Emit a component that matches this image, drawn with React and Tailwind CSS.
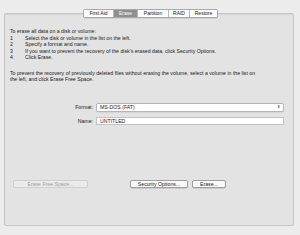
import React from 'react';

const tabs = ['First Aid', 'Erase', 'Partition', 'RAID', 'Restore'];

const steps = [
  'Select the disk or volume in the list on the left.',
  'Specify a format and name.',
  "If you want to prevent the recovery of the disk's erased data, click Security Options.",
  'Click Erase.',
];

export default function App() {
  return (
    <div className="w-[300px] h-[235px] bg-[#ececec] pt-[9px] overflow-hidden" style={{ fontFamily: '"Liberation Sans", Arial, sans-serif' }}>
      {/* tab bar */}
      <div className="relative z-10 flex justify-center pl-[1px] h-[9px]">
        <div className="flex h-[9px] border border-[#a9a9a9] rounded-[2px] bg-white shadow-[0_0.5px_0.5px_rgba(0,0,0,0.15)] overflow-hidden">
          {tabs.map((t, i) => (
            <div
              key={t}
              className={
                'flex items-center justify-center text-[5px] leading-none ' +
                (i > 0 ? 'border-l border-[#b9b9b9] ' : '') +
                (t === 'Erase' ? 'bg-[#8f8f8f] text-white' : 'bg-[#fbfbfb] text-[#222]')
              }
              style={{ width: [29, 24, 31, 21, 28][i] }}
            >
              {t}
            </div>
          ))}
        </div>
      </div>

      {/* panel */}
      <div className="ml-[4px] w-[290px] h-[213px] -mt-[5px] bg-[#e3e3e3] border border-[#c6c6c6] rounded-[2px] shadow-[inset_0_1px_1px_rgba(0,0,0,0.06)] pt-[14px] px-[5px] text-[5.2px] leading-[6.5px] text-[#1a1a1a]">
        <div>To erase all data on a disk or volume:</div>
        {steps.map((s, i) => (
          <div key={i} className="flex">
            <span className="w-[15px] shrink-0">{i + 1}</span>
            <span>{s}</span>
          </div>
        ))}

        <div className="mt-[9px] whitespace-nowrap">
          To prevent the recovery of previously deleted files without erasing the volume, select a volume in the list on
          <br />
          the left, and click Erase Free Space.
        </div>

        {/* form */}
        <div className="mt-[20px] flex flex-col gap-[5px]">
          <div className="flex items-center">
            <span className="w-[86px] text-right pr-[3px]">Format:</span>
            <div className="w-[188px] h-[9px] bg-white border border-[#b5b5b5] rounded-[2px] flex items-center justify-between pl-[3px] pr-[3px] shadow-[0_0.5px_0.5px_rgba(0,0,0,0.12)]">
              <span>MS-DOS (FAT)</span>
              <span className="text-[4px] leading-none text-[#555]">⬍</span>
            </div>
          </div>
          <div className="flex items-center">
            <span className="w-[86px] text-right pr-[3px]">Name:</span>
            <div className="w-[188px] h-[8.5px] bg-white border border-[#c2c2c2] flex items-center pl-[3px]">UNTITLED</div>
          </div>
        </div>

        {/* buttons */}
        <div className="mt-[55px] flex items-center">
          <div className="ml-[3px] w-[75px] h-[8px] border border-[#cfcfcf] rounded-[2px] bg-[#ebebeb] text-[#a0a0a0] flex items-center justify-center">
            Erase Free Space...
          </div>
          <div className="ml-[42px] w-[58px] h-[8px] border border-[#9e9e9e] rounded-[2px] bg-[#fafafa] flex items-center justify-center shadow-[0_0.5px_0.5px_rgba(0,0,0,0.2)]">
            Security Options...
          </div>
          <div className="ml-[4px] w-[34px] h-[8px] border border-[#9e9e9e] rounded-[2px] bg-[#fafafa] flex items-center justify-center shadow-[0_0.5px_0.5px_rgba(0,0,0,0.2)]">
            Erase...
          </div>
        </div>
      </div>
    </div>
  );
}
